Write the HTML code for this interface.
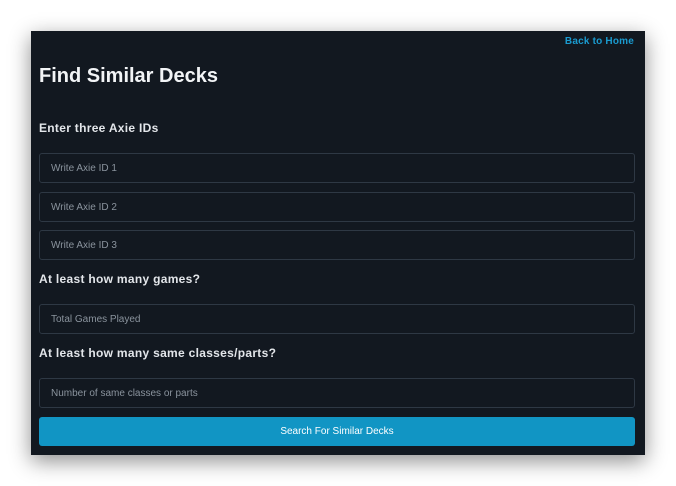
<!DOCTYPE html>
<html><head><style>
*{margin:0;padding:0;box-sizing:border-box}
body{width:676px;height:486px;background:#fff;position:relative;font-family:"Liberation Sans",sans-serif;overflow:hidden}
.panel{position:absolute;left:31px;top:31px;width:614px;height:424px;background:#121820;box-shadow:0 6px 20px rgba(0,0,0,.45)}
.abs{position:absolute}
.back{right:11px;top:5px;color:#1a9bd0;font-size:10px;font-weight:bold;letter-spacing:0.2px}
h1{position:absolute;left:8px;top:34px;color:#f2f4f6;font-size:20px;font-weight:bold;letter-spacing:0px}
.lab{position:absolute;left:8px;color:#e3e6ea;font-size:12px;font-weight:bold;letter-spacing:0.3px}
.inp{position:absolute;left:8px;width:596px;height:30px;border:1px solid #2e3844;border-radius:3px;color:#8a939d;font-size:10px;padding-left:11px;line-height:30px}
.btn{position:absolute;left:8px;top:386px;width:596px;height:29px;background:#1195c4;border-radius:3px;color:#fff;font-size:10px;text-align:center;line-height:30px}
</style></head><body>
<div class="panel">
<div class="abs back">Back to Home</div>
<h1>Find Similar Decks</h1>
<div class="lab" style="top:90px">Enter three Axie IDs</div>
<div class="inp" style="top:122px">Write Axie ID 1</div>
<div class="inp" style="top:161px">Write Axie ID 2</div>
<div class="inp" style="top:199px">Write Axie ID 3</div>
<div class="lab" style="top:241px">At least how many games?</div>
<div class="inp" style="top:273px">Total Games Played</div>
<div class="lab" style="top:315px">At least how many same classes/parts?</div>
<div class="inp" style="top:347px">Number of same classes or parts</div>
<div class="btn">Search For Similar Decks</div>
</div>
</body></html>
